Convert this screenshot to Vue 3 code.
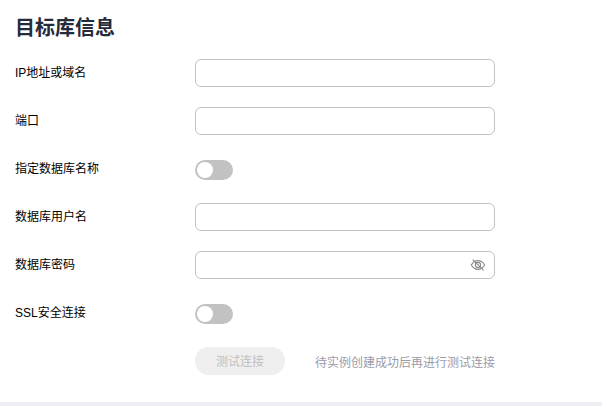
<script setup>
import { reactive, ref } from 'vue'

const fields = [
  { key: 'host', label: 'IP地址或域名', type: 'text' },
  { key: 'port', label: '端口', type: 'text' },
  { key: 'assignName', label: '指定数据库名称', type: 'switch' },
  { key: 'username', label: '数据库用户名', type: 'text' },
  { key: 'password', label: '数据库密码', type: 'password' },
  { key: 'ssl', label: 'SSL安全连接', type: 'switch' }
]

const form = reactive({
  host: '',
  port: '',
  assignName: false,
  username: '',
  password: '',
  ssl: false
})

const showPassword = ref(false)

function inputType(field) {
  return field.type === 'password' && !showPassword.value ? 'password' : 'text'
}
</script>

<template>
  <div class="page">
    <section class="target-panel">
      <h2 class="title">目标库信息</h2>

      <div v-for="field in fields" :key="field.key" class="form-row">
        <span class="row-label">{{ field.label }}</span>
        <button
          v-if="field.type === 'switch'"
          type="button"
          class="switch"
          :class="{ on: form[field.key] }"
          role="switch"
          :aria-checked="form[field.key]"
          @click="form[field.key] = !form[field.key]"
        >
          <span class="knob"></span>
        </button>
        <div v-else class="input-box">
          <input v-model="form[field.key]" :type="inputType(field)" class="control" autocomplete="off" />
          <button v-if="field.type === 'password'" type="button" class="eye-btn" @click="showPassword = !showPassword">
            <svg viewBox="0 0 16 16" width="16" height="16" fill="none" stroke="currentColor" stroke-width="1.1" stroke-linecap="round" stroke-linejoin="round">
              <path d="M1.3 8C3 5.1 5.3 3.6 8 3.6S13 5.1 14.7 8C13 10.9 10.7 12.4 8 12.4S3 10.9 1.3 8Z" />
              <circle cx="8" cy="8" r="2.6" />
              <path v-if="!showPassword" d="M3 3L13.2 12.8" />
            </svg>
          </button>
        </div>
      </div>

      <div class="form-row action-row">
        <button type="button" class="test-btn" disabled>测试连接</button>
        <span class="hint">待实例创建成功后再进行测试连接</span>
      </div>
    </section>
  </div>
</template>

<style>
body {
  background: #eeeff5;
}
</style>

<style scoped>
.page {
  font-family: 'Liberation Sans', 'Noto Sans CJK SC', sans-serif;
  font-size: 12px;
  color: #000;
}

.target-panel {
  box-sizing: border-box;
  height: 402px;
  padding: 13px 15px 0;
  background: #fff;
}

.title {
  margin: 0 0 16px;
  font-size: 20px;
  line-height: 30px;
  font-weight: 700;
  color: #252b3a;
}

.form-row {
  display: flex;
  align-items: center;
  height: 28px;
  margin-bottom: 20px;
}

.row-label {
  width: 180px;
  line-height: 18px;
  white-space: nowrap;
}

.input-box {
  display: flex;
  align-items: center;
  box-sizing: border-box;
  width: 300px;
  height: 28px;
  padding: 0 8px;
  border: 1px solid #c2c2c2;
  border-radius: 6px;
  background: #fff;
}

.control {
  flex: 1;
  min-width: 0;
  padding: 0;
  border: none;
  outline: none;
  background: transparent;
  font: inherit;
}

.eye-btn {
  display: flex;
  padding: 0;
  border: none;
  background: transparent;
  color: #8a8a8a;
  cursor: pointer;
}

.switch {
  box-sizing: border-box;
  width: 38px;
  height: 20px;
  margin-top: 2px;
  padding: 2px;
  border: none;
  border-radius: 10px;
  background: #c2c2c2;
  cursor: pointer;
}

.switch.on {
  background: #5e7ce0;
}

.knob {
  display: block;
  width: 16px;
  height: 16px;
  border-radius: 50%;
  background: #fff;
}

.switch.on .knob {
  margin-left: auto;
}

.action-row {
  margin-bottom: 0;
  padding-left: 180px;
}

.test-btn {
  width: 90px;
  height: 28px;
  padding: 2px 0 0;
  border: none;
  border-radius: 14px;
  background: #efefef;
  color: #bfbfbf;
  font: inherit;
  line-height: 18px;
}

.hint {
  margin: 4px 0 0 30px;
  line-height: 18px;
  color: #9b9aa8;
}
</style>
